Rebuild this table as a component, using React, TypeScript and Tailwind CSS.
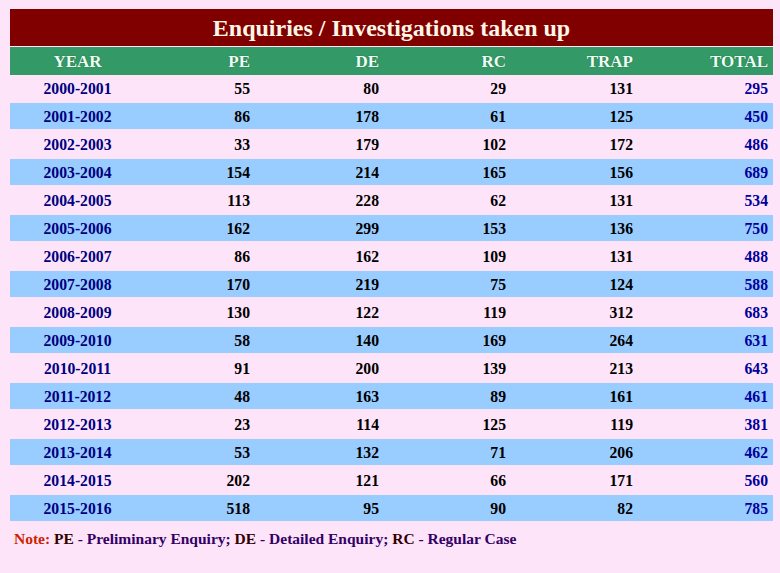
const rows = [
  ["2000-2001", 55, 80, 29, 131, 295],
  ["2001-2002", 86, 178, 61, 125, 450],
  ["2002-2003", 33, 179, 102, 172, 486],
  ["2003-2004", 154, 214, 165, 156, 689],
  ["2004-2005", 113, 228, 62, 131, 534],
  ["2005-2006", 162, 299, 153, 136, 750],
  ["2006-2007", 86, 162, 109, 131, 488],
  ["2007-2008", 170, 219, 75, 124, 588],
  ["2008-2009", 130, 122, 119, 312, 683],
  ["2009-2010", 58, 140, 169, 264, 631],
  ["2010-2011", 91, 200, 139, 213, 643],
  ["2011-2012", 48, 163, 89, 161, 461],
  ["2012-2013", 23, 114, 125, 119, 381],
  ["2013-2014", 53, 132, 71, 206, 462],
  ["2014-2015", 202, 121, 66, 171, 560],
  ["2015-2016", 518, 95, 90, 82, 785],
];

const cols = "grid grid-cols-[135px_110px_129px_127px_127px_135px]";

export default function App() {
  return (
    <div className="w-[780px] h-[573px] bg-[#fde4f9] pl-[10px] pt-[9px] font-['Liberation_Serif',serif] font-bold overflow-hidden">
      <div className="w-[763px] flex flex-col gap-[1px]">
        {/* Title */}
        <div className="h-[37px] bg-[#800000] flex items-center justify-center text-[24px] text-[#fff6e6] pt-[1px]">
          Enquiries / Investigations taken up
        </div>

        {/* Header */}
        <div className={`${cols} h-[28px] items-center bg-[#339966] text-[17px] text-[#eefff4] [text-shadow:0_0_1px_#14502f] pt-[1px]`}>
          <div className="text-center">YEAR</div>
          <div className="text-right pr-[5px]">PE</div>
          <div className="text-right pr-[5px]">DE</div>
          <div className="text-right pr-[5px]">RC</div>
          <div className="text-right pr-[5px]">TRAP</div>
          <div className="text-right pr-[5px]">TOTAL</div>
        </div>
      </div>

      {/* Rows */}
      <div className="w-[763px] flex flex-col gap-[2px] text-[15.7px]">
        {rows.map((r, i) => (
          <div
            key={r[0]}
            className={`${cols} h-[26px] items-center pt-[1px] ${i % 2 === 1 ? "bg-[#99ccff]" : ""}`}
          >
            <div className="text-center text-[#000080]">{r[0]}</div>
            <div className="text-right pr-[5px] text-black">{r[1]}</div>
            <div className="text-right pr-[5px] text-black">{r[2]}</div>
            <div className="text-right pr-[5px] text-black">{r[3]}</div>
            <div className="text-right pr-[5px] text-black">{r[4]}</div>
            <div className="text-right pr-[5px] text-[#000099]">{r[5]}</div>
          </div>
        ))}
      </div>

      <div className="mt-[6px] pl-[4px] text-[15.5px] text-[#330066]">
        <span className="text-[#cc2200]">Note:</span>{" "}
        <span className="text-[#330000]">PE</span> - Preliminary Enquiry;{" "}
        <span className="text-[#330000]">DE</span> - Detailed Enquiry;{" "}
        <span className="text-[#330000]">RC</span> - Regular Case
      </div>
    </div>
  );
}
